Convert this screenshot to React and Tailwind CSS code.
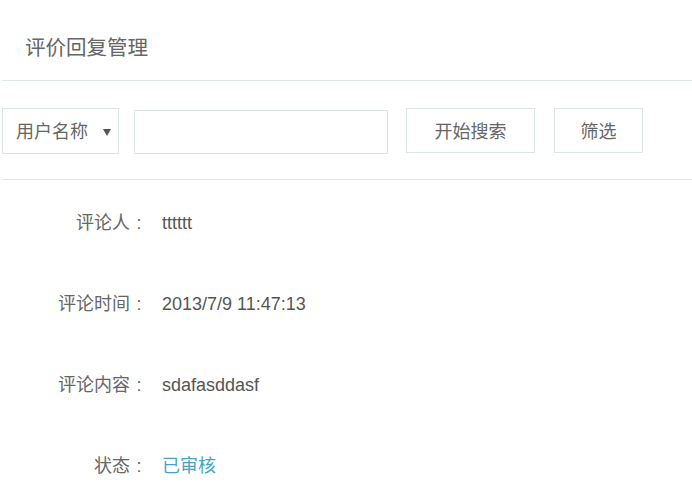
import React from 'react';

const rows = [
  { label: '评论人', value: 'tttttt' },
  { label: '评论时间', value: '2013/7/9 11:47:13' },
  { label: '评论内容', value: 'sdafasddasf' },
  { label: '状态', value: '已审核', accent: true },
];

const App = () => {
  return (
    <div
      className="w-[692px] h-[504px] bg-white overflow-hidden pl-[2px]"
      style={{ fontFamily: '"Liberation Sans", "Noto Sans CJK SC", sans-serif' }}
    >
      <div className="h-[81px] border-b border-[#dfe6e8] pl-[23px] pt-[34px] text-[20.5px] leading-[28px] text-[#666]">
        评价回复管理
      </div>

      <div className="h-[99px] border-b border-[#dfe6e8] flex items-start pt-[27px]">
        <div className="w-[117px] h-[46px] border border-[#dde4e6] flex items-center pl-[13px] pt-[2px] text-[18px] text-[#666]">
          <span>用户名称</span>
          <svg className="ml-[15px]" width="8" height="7" viewBox="0 0 8 7">
            <path d="M0 0 H8 L4 7 Z" fill="#555" />
          </svg>
        </div>
        <input
          type="text"
          className="ml-[15px] mt-[2px] w-[254px] h-[44px] border border-[#dde4e6] outline-none px-2"
        />
        <button className="ml-[18px] w-[129px] h-[45px] pt-[3px] border border-[#dde4e6] bg-white text-[18px] text-[#666]">
          开始搜索
        </button>
        <button className="ml-[19px] w-[89px] h-[45px] pt-[3px] border border-[#dde4e6] bg-white text-[18px] text-[#666]">
          筛选
        </button>
      </div>

      <div className="flex flex-col pt-[31px] gap-[57px]">
        {rows.map((row) => (
          <div key={row.label} className="flex items-center leading-[24px]">
            <div className="w-[146px] flex justify-end text-[18px] text-[#666]">
              <span>{row.label}</span>
              <span className="w-[18px] text-center">:</span>
            </div>
            <div className={`ml-[14px] text-[18px] ${row.accent ? 'text-[#4aa3bd]' : 'text-[#555]'}`}>
              {row.value}
            </div>
          </div>
        ))}
      </div>
    </div>
  );
};

export default App;
